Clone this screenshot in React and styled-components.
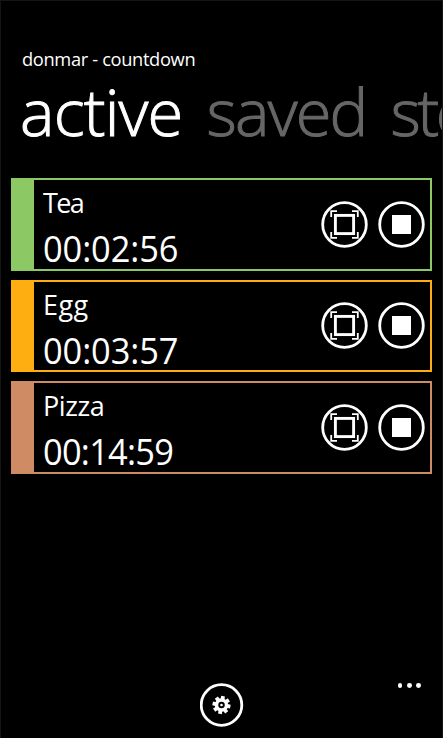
import React from 'react'
import styled, { createGlobalStyle } from 'styled-components';

const GlobalStyle = createGlobalStyle`
body{
  margin:0;
  background:#000;
  overflow:hidden;
}
* {
  box-sizing:border-box;
}
`;

const Phone = styled.div`
  width:443px;
  height:738px;
  display:flex;
  flex-direction:column;
  overflow:hidden;
  background:#000;
  color:#fff;
  border:1px solid #141414;
  border-bottom:none;
  font-family:"Open Sans","Noto Sans",sans-serif;
`;

const Header = styled.header`
  height:177px;
  padding:45px 0 0 21px;
  overflow:hidden;
`;

const AppTitle = styled.h1`
  margin:0;
  font-size:18.3px;
  font-weight:400;
  line-height:26px;
  letter-spacing:-0.35px;
  white-space:nowrap;
`;

const Pivot = styled.nav`
  display:flex;
  gap:24px;
  margin:3px 0 0 -2px;
`;

const PivotItem = styled.span`
  flex:none;
  font-size:65px;
  font-weight:300;
  line-height:72px;
  letter-spacing:${(props) => props.$spacing};
  color:${(props) => (props.$active ? '#fff' : '#666')};
  -webkit-text-stroke:1px currentColor;
`;

const TimerList = styled.main`
  display:flex;
  flex-direction:column;
  gap:9px;
  padding:0 10px;
`;

const TimerCard = styled.section`
  display:flex;
  height:92.5px;
  border:2px solid ${(props) => props.$color};
  border-left-width:23px;
`;

const TimerInfo = styled.div`
  flex:1;
  padding:5px 0 0 9px;
`;

const TimerName = styled.div`
  font-size:27px;
  line-height:36px;
  letter-spacing:${(props) => props.$spacing};
`;

const TimerTime = styled.div`
  margin-top:2px;
  font-size:37px;
  line-height:50px;
  letter-spacing:${(props) => props.$spacing};
  white-space:nowrap;
  transform:scaleX(0.93);
  transform-origin:left;
`;

const Actions = styled.div`
  display:flex;
  align-items:center;
  gap:10px;
  padding-right:5px;
`;

const RoundButton = styled.button`
  display:block;
  width:${(props) => props.$size}px;
  height:${(props) => props.$size}px;
  padding:0;
  border:none;
  background:none;
  color:#fff;
  cursor:pointer;

  svg {
    display:block;
  }
`;

const AppBar = styled.footer`
  display:grid;
  grid-template-columns:1fr 44px 1fr;
  align-items:start;
  height:61px;
  margin-top:auto;
`;

const SettingsSlot = styled.div`
  grid-column:2;
  padding-top:6px;
`;

const MoreButton = styled.button`
  justify-self:end;
  display:flex;
  gap:4.4px;
  margin:5.8px 21px 0 0;
  padding:0;
  border:none;
  background:none;
`;

const Dot = styled.i`
  width:4.9px;
  height:4.9px;
  border-radius:50%;
  background:#fff;
`;

const timers = [
  { name: 'Tea', time: '00:02:56', color: '#8cc965', spacing: '-1.6px', timeSpacing: '-0.1px' },
  { name: 'Egg', time: '00:03:57', color: '#ffae12', spacing: '0.4px', timeSpacing: '-0.1px' },
  { name: 'Pizza', time: '00:14:59', color: '#cf8b64', spacing: '-0.4px', timeSpacing: '-0.8px' },
];

const FullscreenIcon = () => (
  <svg width="47" height="47" viewBox="0 0 47 47" fill="none" stroke="currentColor">
    <circle cx="23.5" cy="23.5" r="21.8" strokeWidth="2.8" />
    <rect x="14.4" y="14.4" width="18.2" height="18.2" strokeWidth="2.9" />
    <path d="M10.2 16v-5.8H16M31 10.2h5.8V16M36.8 31v5.8H31M16 36.8h-5.8V31" strokeWidth="1.8" />
  </svg>
)

const StopIcon = () => (
  <svg width="47" height="47" viewBox="0 0 47 47" fill="none" stroke="currentColor">
    <circle cx="23.5" cy="23.5" r="21.8" strokeWidth="2.8" />
    <rect x="14" y="14" width="19" height="19" fill="currentColor" stroke="none" />
  </svg>
)

const GearIcon = () => (
  <svg width="44" height="44" viewBox="0 0 44 44" fill="none" stroke="currentColor">
    <circle cx="21.5" cy="22" r="20.3" strokeWidth="2.8" />
    <circle cx="21.5" cy="22" r="5" strokeWidth="3.5" />
    <circle cx="21.5" cy="22" r="1.3" fill="currentColor" stroke="none" />
    {[10, 55, 100, 145, 190, 235, 280, 325].map((angle) => (
      <path key={angle} d="M21.5 16.4V13" strokeWidth="3.8" transform={`rotate(${angle} 21.5 22)`} />
    ))}
  </svg>
)

const Timer = ({ timer }) => (
  <TimerCard $color={timer.color}>
    <TimerInfo>
      <TimerName $spacing={timer.spacing}>{timer.name}</TimerName>
      <TimerTime $spacing={timer.timeSpacing}>{timer.time}</TimerTime>
    </TimerInfo>
    <Actions>
      <RoundButton $size={47} aria-label="fullscreen"><FullscreenIcon /></RoundButton>
      <RoundButton $size={47} aria-label="stop"><StopIcon /></RoundButton>
    </Actions>
  </TimerCard>
)

const App = () => {
  return (
    <Phone>
      <GlobalStyle />
      <Header>
        <AppTitle>donmar - countdown</AppTitle>
        <Pivot>
          <PivotItem $active $spacing="-0.8px">active</PivotItem>
          <PivotItem $spacing="-1.8px">saved</PivotItem>
          <PivotItem $spacing="-3.4px">store</PivotItem>
        </Pivot>
      </Header>
      <TimerList>
        {timers.map((timer) => (
          <Timer key={timer.name} timer={timer} />
        ))}
      </TimerList>
      <AppBar>
        <SettingsSlot>
          <RoundButton $size={44} aria-label="settings"><GearIcon /></RoundButton>
        </SettingsSlot>
        <MoreButton aria-label="more">
          <Dot />
          <Dot />
          <Dot />
        </MoreButton>
      </AppBar>
    </Phone>
  )
}

export default App
